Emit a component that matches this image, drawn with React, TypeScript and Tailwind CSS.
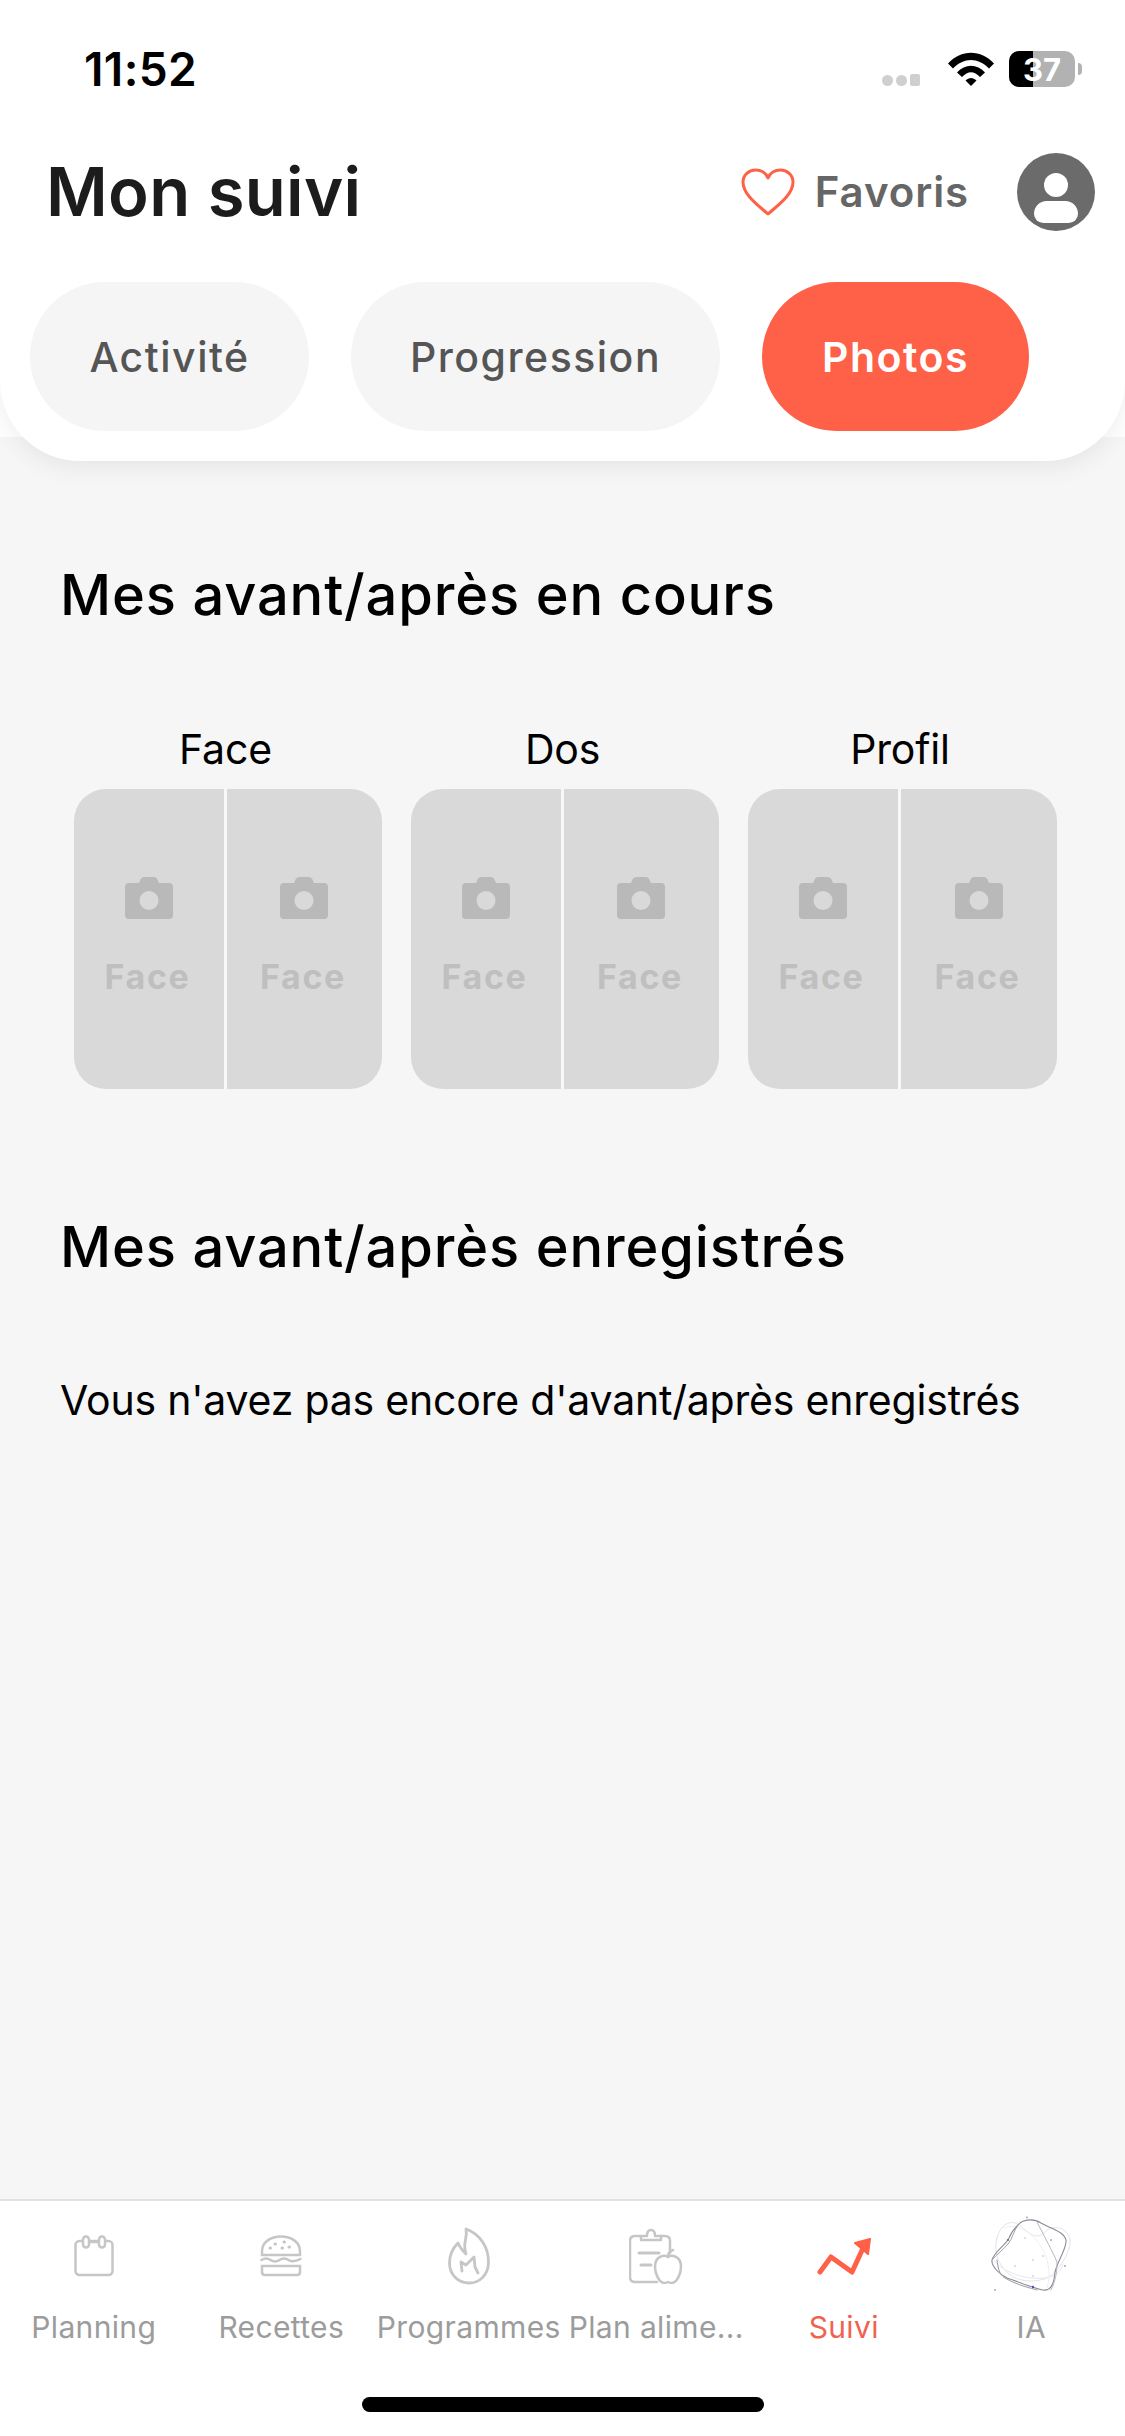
const ANGLES = [
  { label: "Face", w: "w-[308px]" },
  { label: "Dos", w: "w-[308px]" },
  { label: "Profil", w: "w-[309px]" },
];

const TABS = ["Activité", "Progression", "Photos"];

function CameraIcon() {
  return (
    <svg width="48" height="42" viewBox="0 0 48 42" fill="#b9b9b9">
      <path
        fillRule="evenodd"
        d="M4 6h10l1.5-3.5Q16.5 0 19 0h10q2.500 0 3.500 2.500L34 6h10q4 0 4 4v28q0 4-4 4H4q-4 0-4-4V10q0-4 4-4Zm20 8a9.500 9.500 0 1 0 0 19a9.500 9.500 0 0 0 0-19Z"
      />
    </svg>
  );
}

function PhotoSlot({ className }: { className: string }) {
  return (
    <div className={`${className} flex flex-col items-center pt-[88px]`}>
      <div className="pr-[1px]">
        <CameraIcon />
      </div>
      <span className="mt-[38px] pr-[3px] text-[34px] leading-[40px] font-bold tracking-[1.6px] text-[#bfbfbf]">Face</span>
    </div>
  );
}

function AngleCard({ label, w }: { label: string; w: string }) {
  return (
    <div className={`${w} flex flex-col items-center`}>
      <div className="h-[50px] pr-[5px] text-[41px] leading-[50px] tracking-[-0.2px] text-black">{label}</div>
      <div className="mt-[15px] w-full h-[300px] rounded-[32px] overflow-hidden flex bg-[#d9d9d9]">
        <PhotoSlot className="w-[150px]" />
        <div className="w-[3px] bg-[#f8f8f8]" />
        <PhotoSlot className="flex-1" />
      </div>
    </div>
  );
}

function CalendarIcon() {
  return (
    <svg width="40" height="42" viewBox="0 0 40 42" fill="none" stroke="#c6c6c6" strokeWidth="2.500">
      <rect x="1.500" y="6" width="37" height="34" rx="4" />
      <rect x="9" y="1.500" width="6" height="11" rx="3" fill="#fff" />
      <rect x="25" y="1.500" width="6" height="11" rx="3" fill="#fff" />
      <path d="M15 7h10" />
    </svg>
  );
}

function BurgerIcon() {
  return (
    <svg width="42" height="42" viewBox="0 0 42 42" fill="none" stroke="#c6c6c6" strokeWidth="2.500" strokeLinecap="round">
      <path d="M2 20v-4C2 7 11 1.500 21 1.500S40 7 40 16v4Z" />
      <path d="M1.500 25q4.500-3 9 0t9 0t9 0t12-1" />
      <path d="M2 31h38v6q0 3-3 3H5q-3 0-3-3Z" />
      <path d="M15 9h.5M24 7h.5M29 12h.5M22 13h.5M10 13h.5" strokeWidth="3" />
    </svg>
  );
}

function FlameIcon() {
  return (
    <svg width="42" height="58" viewBox="0 0 42 58" fill="none" stroke="#c6c6c6" strokeWidth="2.800" strokeLinecap="round" strokeLinejoin="round">
      <path d="M18 2c2 10-4 13 0 25c-3-3-6-6-8-11C5 21 1.500 27 1.500 36c0 12 9 20 19.500 20s19.500-8 19.500-21C40.500 20 32 7 18 2Z" />
      <path d="M14 44l-1-9l5 3l8-8l1 10l3 6" />
    </svg>
  );
}

function PlanIcon() {
  return (
    <svg width="54" height="56" viewBox="0 0 54 56" fill="none" stroke="#c6c6c6" strokeWidth="2.500" strokeLinecap="round" strokeLinejoin="round">
      <path d="M28 54H6q-5 0-5-5V13q0-5 5-5h5M32 8h4q5 0 5 5v12" />
      <path d="M12 12V8h6q0-6 4-6t4 6h6v4Z" />
      <path d="M10 25h20M12 37h10" strokeWidth="3" />
      <path d="M39 29c-3-2-13-2-13 10c0 8 5 16 9 16q2 0 4-1q2 1 4 1c4 0 9-8 9-16c0-12-10-12-13-10Z" />
      <path d="M39 29c0-3 2-6 5-7" />
    </svg>
  );
}

function TrendIcon() {
  return (
    <svg width="54" height="37" viewBox="0 0 54 37" fill="none">
      <path d="M3 34L14 19L35 34L47 8" stroke="#ff6048" strokeWidth="5" strokeLinecap="round" strokeLinejoin="round" />
      <path d="M38 5L53 1L51 16Z" fill="#ff6048" stroke="#ff6048" strokeWidth="2" strokeLinejoin="round" />
    </svg>
  );
}

function OrbIcon() {
  return (
    <svg width="80" height="80" viewBox="0 0 80 80" fill="none" strokeLinecap="round">
      <path d="M6 22C10 6 22 2 32 12C40 20 48 24 56 14C66 8 78 14 79 24C80 36 70 50 60 60C50 66 30 68 18 58C8 50 2 36 6 22Z" stroke="#e4e4ea" strokeWidth="1" />
      <path d="M4 46C16 58 36 64 54 62C64 60 70 56 72 48" stroke="#e8e8ee" strokeWidth="1" />
      <path d="M12 12C26 6 44 18 52 34C58 46 60 60 56 72" stroke="#f0f0f4" strokeWidth="1" />
      <path d="M27 9C33 2 44 3 50 7C58 12 73 15 75 24C76 32 67 44 64 56C63 68 60 75 52 74C42 72 28 66 16 62C8 58 0 50 1 44C3 36 14 30 18 22C20 17 23 13 27 9Z" stroke="#8b8b96" strokeWidth="1.100" />
      <path d="M27 9C22 16 22 22 17 28C12 34 6 38 1 44" stroke="#a2a2ac" strokeWidth="1" />
      <path d="M6 44C7 52 8 58 14 62C28 70 40 72 46 74" stroke="#9a9aa4" strokeWidth="1" />
      <path d="M46 6C54 22 62 36 66 46C66 58 64 66 60 74" stroke="#b8b8c0" strokeWidth="1" />
      <g fill="#a8a8b4">
        <circle cx="36" cy="1.500" r="1" />
        <circle cx="60" cy="24" r="1" />
        <circle cx="74" cy="50" r="1" />
        <circle cx="4" cy="74" r="1" />
        <circle cx="42" cy="60" r="0.700" />
        <circle cx="24" cy="50" r="0.700" />
        <circle cx="52" cy="40" r="0.700" />
        <circle cx="42" cy="44" r="0.700" />
        <circle cx="34" cy="22" r="0.700" />
      </g>
      <circle cx="17" cy="24" r="1.100" fill="#6d6d78" />
      <circle cx="42" cy="71" r="1.200" fill="#4a4ac0" />
    </svg>
  );
}

const NAV = [
  { label: "Planning", icon: <CalendarIcon />, active: false },
  { label: "Recettes", icon: <BurgerIcon />, active: false },
  { label: "Programmes", icon: <FlameIcon />, active: false },
  { label: "Plan alime...", icon: <PlanIcon />, active: false },
  { label: "Suivi", icon: <TrendIcon />, active: true },
  { label: "IA", icon: <OrbIcon />, active: false },
];

export default function App() {
  return (
    <div className="w-[1125px] h-[2436px] flex flex-col bg-[#f6f6f6] font-['Inter',sans-serif] overflow-hidden">
      {/* Top card */}
      <div className="h-[437px] bg-white shrink-0">
        <div className="relative z-10 h-[461px] bg-white rounded-b-[80px] shadow-[0_6px_24px_rgba(0,0,0,0.07)]">
          {/* Status bar */}
          <div className="h-[138px] flex items-center justify-between pl-[84px] pr-[43px]">
            <span className="text-[46px] leading-none font-semibold tracking-[0.4px] text-black">11:52</span>
            <div className="flex items-center">
              <div className="flex items-end gap-[3px] mt-[22px]">
                <span className="w-[11px] h-[11px] rounded-full bg-[#cfcfcf]" />
                <span className="w-[11px] h-[11px] rounded-full bg-[#cfcfcf]" />
                <span className="w-[10px] h-[12px] rounded-[2px] bg-[#cfcfcf]" />
              </div>
              <svg className="ml-[28px]" width="46" height="34" viewBox="0 0 46 34">
                <path d="M0 11.500C13-3 33-3 46 11.500L41 16.500C30 5 16 5 5 16.500Z" />
                <path d="M9 20.500C17 11.500 29 11.500 37 20.500L32 25C26 18.500 20 18.500 14 25Z" />
                <path d="M17.500 28.500C21 25 25 25 28.500 28.500L23 34Z" />
              </svg>
              <div className="ml-[15px] relative w-[66px] h-[36px] rounded-[10px] overflow-hidden flex bg-[#b2b2b2]">
                <div className="w-[24px] h-full bg-black" />
                <span className="absolute inset-0 flex items-center justify-center text-[31px] font-bold text-white leading-none">
                  37
                </span>
              </div>
              <div className="ml-[3px] w-[4px] h-[12px] rounded-r-full bg-[#b2b2b2]" />
            </div>
          </div>

          {/* Title row */}
          <div className="h-[78px] mt-[15px] flex items-center pl-[46px] pr-[30px]">
            <h1 className="pb-[2px] text-[67px] leading-none font-semibold text-[#1c1c1c] tracking-[0.3px]">Mon suivi</h1>
            <svg className="ml-auto" width="54" height="48" viewBox="0 0 54 48" fill="none">
              <path
                d="M27 46C18 38 2 27 2 14C2 7 8 2 14.500 2C20 2 25 5 27 10C29 5 34 2 39.500 2C46 2 52 7 52 14C52 27 36 38 27 46Z"
                stroke="#ff6048"
                strokeWidth="3"
                strokeLinejoin="round"
              />
            </svg>
            <span className="ml-[20px] text-[42px] leading-none font-semibold tracking-[0.9px] text-[#666666]">Favoris</span>
            <div className="ml-[48px] w-[78px] h-[78px] rounded-full bg-[#6b6b6b] overflow-hidden flex flex-col items-center">
              <div className="mt-[20px] w-[24px] h-[24px] rounded-full bg-white" />
              <div className="mt-[4px] w-[44px] h-[22px] rounded-t-[22px] rounded-b-[16px] bg-white" />
            </div>
          </div>

          {/* Tabs */}
          <div className="mt-[51px] flex pl-[30px] gap-[42px]">
            {TABS.map((tab) =>
              tab === "Photos" ? (
                <div
                  key={tab}
                  className="w-[267px] h-[149px] pt-[2px] rounded-full bg-[#ff6048] flex items-center justify-center text-[41px] font-semibold tracking-[1.5px] text-white"
                >
                  {tab}
                </div>
              ) : (
                <div
                  key={tab}
                  className={`${tab === "Activité" ? "w-[279px]" : "w-[369px]"} h-[149px] pt-[2px] rounded-full bg-[#f5f5f5] flex items-center justify-center text-[41px] font-medium tracking-[1.5px] text-[#555555]`}
                >
                  {tab}
                </div>
              ),
            )}
          </div>
        </div>
      </div>

      {/* Content */}
      <main className="flex-1 pt-[127px]">
        <h2 className="pl-[60px] text-[56px] leading-[62px] font-medium tracking-[0.85px] text-black">
          Mes avant/après en cours
        </h2>

        <div className="mt-[98px] pl-[74px] flex gap-[29px]">
          {ANGLES.map((a) => (
            <AngleCard key={a.label} label={a.label} w={a.w} />
          ))}
        </div>

        <h2 className="mt-[127px] pl-[60px] text-[56px] leading-[62px] font-medium tracking-[0.85px] text-black">
          Mes avant/après enregistrés
        </h2>
        <p className="mt-[97px] pl-[60px] text-[41px] leading-[50px] tracking-[-0.2px] text-black">
          Vous n'avez pas encore d'avant/après enregistrés
        </p>
      </main>

      {/* Bottom nav */}
      <nav className="h-[237px] shrink-0 bg-white border-t-[2px] border-[#e2e2e2]">
        <div className="flex h-[162px]">
          {NAV.map((item) => (
            <div key={item.label} className="w-[187.5px] flex flex-col items-center">
              <div className="h-[110px] flex items-center justify-center">{item.icon}</div>
              <span
                className={`-mt-[2px] text-[30px] leading-[36px] tracking-[0.35px] whitespace-nowrap ${item.active ? "text-[#f0634e]" : "text-[#9c9c9c]"}`}
              >
                {item.label}
              </span>
            </div>
          ))}
        </div>
        <div className="mt-[34px] mx-auto w-[402px] h-[15px] rounded-full bg-black" />
      </nav>
    </div>
  );
}
